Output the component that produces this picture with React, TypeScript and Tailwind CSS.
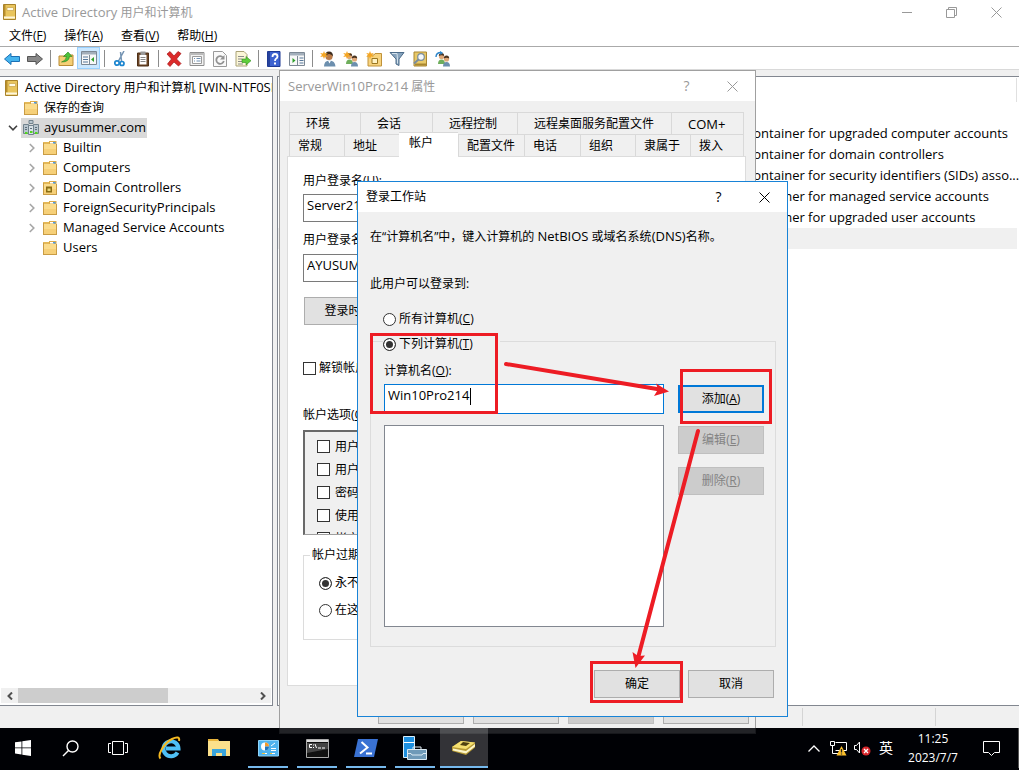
import React from "react";

const FolderIcon = ({ badge }: any) => (
  <svg width="16" height="16" viewBox="0 0 16 16" className="shrink-0">
    <path d="M1 2h6v2H1z" fill="#e3b858" />
    <path d="M7 1h7.500v3.500H7z" fill="#dcab4a" />
    <path d="M8 2h4v1.500H8z" fill="#fff" />
    <path d="M11 2h2.500v1.500H11z" fill="#4d9be6" />
    <path d="M1 4h14v10.500H1z" fill="#fbdc8c" />
    <path d="M1 9h14v5.500H1z" fill="#f6d079" />
    <path d="M1 14.500h14M14.500 4v10.500M1.500 3v11" fill="none" stroke="#c99c45" />
    {badge && (
      <g>
        <path d="M4 6.500h6v6H4z" fill="#8a6d15" />
        <path d="M5.500 8.500h3v2.500h-3z" fill="#e9d67a" />
      </g>
    )}
  </svg>
);

const BookIcon = () => (
  <svg width="16" height="16" viewBox="0 0 16 16" className="shrink-0">
    <path d="M1.500 .5h12v15h-12z" fill="#e9c55d" stroke="#a9832a" />
    <path d="M2 1h1.500v11.500H2z" fill="#b98f2c" />
    <path d="M5 3.500h6.500v3H5z" fill="#fffbe6" stroke="#c7a24a" strokeWidth=".7" />
    <path d="M2 12.500h11v2H2z" fill="#fdf6dd" />
  </svg>
);

const DomainIcon = () => (
  <svg width="16" height="16" viewBox="0 0 16 16" className="shrink-0">
    <path d="M6 .5h4v3H6zM.5 4.500h5v9h-5zM10.500 4.500h5v9h-5z" fill="#b9c6cf" stroke="#71828d" />
    <path d="M5.500 5.500h5v9h-5z" fill="#d7e0e5" stroke="#71828d" />
    <path d="M2 7.500h2M2 9.500h2M7 8.500h2M12 7.500h2M12 9.500h2" stroke="#5f707b" />
    <path d="M2 12h2.500v2H2zM7 11h2.500v2H7zM12 12h2.500v2H12z" fill="#51d61e" />
  </svg>
);

const person = (x: number, y: number, body: string) => (
  <g>
    <path d={`M${x - 3.5} ${y + 9}q0-4.500 3.500-4.500t3.500 4.500z`} fill={body} />
    <circle cx={x} cy={y + 1.5} r="2.600" fill="#e0a878" />
    <path d={`M${x - 2.7} ${y + 1}q0-3 2.700-3t2.700 3q-2.700-1.500-5.400 0z`} fill="#4b3420" />
  </g>
);

const star = (
  <path d="M4 0l1 2.600L7.800 2 6 4l1.800 2L5 5.500 4 8 3 5.500 .2 6 2 4 .2 2 3 2.600z" fill="#f5a623" />
);

const toolIcons: any = {
  back: (
    <path d="M.5 8L7 2.500v3h8.500v5H7v3z" fill="#45b4ee" stroke="#1b70b5" />
  ),
  forward: (
    <path d="M15.500 8L9 2.500v3H.5v5H9v3z" fill="#888" stroke="#555" />
  ),
  up: (
    <g>
      <path d="M1 5h5l1-1h8v10.500H1z" fill="#f5cf76" stroke="#b98b35" />
      <path d="M3.500 11Q8 10 8.500 5.500H5.500L10 1l4 4.500h-2.500Q11 11 3.500 11z" fill="#4cc23b" stroke="#25821b" strokeWidth=".6" />
    </g>
  ),
  tree: (
    <g>
      <path d="M.5 1.500h15v13H.5z" fill="#f8f8f8" stroke="#7c8894" />
      <path d="M1 2h14v2.500H1z" fill="#a3afbb" />
      <path d="M2 7h5M2 9.500h5M2 12h5" stroke="#56789b" />
      <path d="M8.500 5v9" stroke="#7c8894" />
      <path d="M13 7v5l-3-2.500z" fill="#2fa02a" />
    </g>
  ),
  cut: (
    <g fill="none">
      <path d="M12 0L6.500 10M8.500 1L9.500 10" stroke="#7594b3" strokeWidth="1.500" />
      <circle cx="5" cy="12" r="2.200" stroke="#1c85cf" strokeWidth="1.700" />
      <circle cx="10" cy="12.500" r="2" stroke="#1c85cf" strokeWidth="1.700" />
    </g>
  ),
  paste: (
    <g>
      <path d="M2.500 2h11v13h-11z" fill="#6b4526" stroke="#4d2f17" />
      <path d="M4.500 4h7v9.500h-7z" fill="#fff" />
      <path d="M5.500 .5h5V4h-5z" fill="#999" />
      <path d="M5.500 6.500h5M5.500 8.500h5M5.500 10.500h5" stroke="#888" />
    </g>
  ),
  remove: (
    <path d="M1 3l3-2.500L8 5l4-4.500 3 2L10.500 8 15 12.500 12.500 15 8 11l-4 4.500L1.500 13 5.500 8z" fill="#dc2a2a" stroke="#a31515" strokeWidth=".7" />
  ),
  props: (
    <g>
      <path d="M1 1.500h14v13H1z" fill="#f3f3f3" stroke="#8e8e8e" />
      <path d="M1.500 2h13v2h-13z" fill="#bbb" />
      <path d="M3.500 5.500h9v7h-9z" fill="#fff" stroke="#9a9a9a" />
      <path d="M5 7.500h1M7.500 7.500h4M5 10h1M7.500 10h4" stroke="#6f8fb0" />
    </g>
  ),
  refresh: (
    <g>
      <path d="M1.500 .5h9l4 4v11h-13z" fill="#fafafa" stroke="#9a9a9a" />
      <path d="M11 6.500A3.800 3.800 0 1 0 11.800 10" fill="none" stroke="#929292" strokeWidth="1.800" />
      <path d="M12.500 4v4.500H8z" fill="#929292" />
    </g>
  ),
  export: (
    <g>
      <path d="M1 .5h8l3 3v11.500H1z" fill="#fbf6d8" stroke="#aaa277" />
      <path d="M3 5.500h6M3 8h4M3 10.500h4M3 13h5" stroke="#8c8c8c" />
      <path d="M7 8h4V5.500L16 9.700 11 14v-2.500H7z" fill="#5fce3c" stroke="#2f8d1c" strokeWidth=".6" />
    </g>
  ),
  help: (
    <g>
      <path d="M1.500 .5h12.500v15H1.500z" fill="#3d62d0" stroke="#1f3a94" />
      <path d="M2 1h2v14H2z" fill="#27439e" />
      <path d="M6.500 6q0-3 2.500-3t2.500 2.500q0 1.500-1.500 2.300-1 .6-1 2.200" fill="none" stroke="#fff" strokeWidth="1.800" />
      <path d="M8 11.500h2v2H8z" fill="#fff" />
    </g>
  ),
  pane: (
    <g>
      <path d="M.5 1.500h15v13H.5z" fill="#f8f8f8" stroke="#7c8894" />
      <path d="M1 2h14v2.500H1z" fill="#a3afbb" />
      <path d="M10.500 7h4M10.500 9.500h4M10.500 12h4" stroke="#56789b" />
      <path d="M8.500 5v9" stroke="#7c8894" />
      <path d="M3.500 7v5l3-2.500z" fill="#2fa02a" />
    </g>
  ),
  user: (
    <g>
      <path d="M4 15.500Q4 9.500 9.500 9.500t6 6z" fill="#6c8fae" />
      <path d="M8 9.500l1.500 3 1.500-3z" fill="#fff" />
      <circle cx="9" cy="5.500" r="3.600" fill="#b97a48" />
      <path d="M5 5.500Q5 .5 9 .5t4 5q-1-2-3.500-2.500T5 5.500z" fill="#3b2b1e" />
      {star}
    </g>
  ),
  users: (
    <g>
      {person(6.5, 4, "#6fae5c")}
      {person(11.5, 6.5, "#6c8fae")}
      {star}
    </g>
  ),
  newou: (
    <g>
      <path d="M2 4h6l1-1.500h6.500V15H2z" fill="#f7d37e" stroke="#c0923a" />
      <path d="M6 7.500h5.500v5H6z" fill="#fff2c4" stroke="#9a7620" />
      {star}
    </g>
  ),
  filter: (
    <g>
      <path d="M1 1.500h14L10 8v6.500l-3-1.500V8z" fill="#86a3bd" stroke="#4d6c8a" />
      <path d="M3 2.500h5L8.500 8v4.500" fill="none" stroke="#d5e2ec" />
    </g>
  ),
  find: (
    <g>
      <path d="M2 1h12.500v14H2z" fill="#e8c968" stroke="#a98630" />
      <path d="M3 12.500h11v2H3z" fill="#a98630" />
      <circle cx="9" cy="6" r="3.300" fill="#f4f8fb" stroke="#7a8d9c" strokeWidth="1.200" />
      <path d="M6.500 8.500L2 12.500" stroke="#7a8d9c" strokeWidth="2" />
    </g>
  ),
  group: (
    <g>
      {person(6.5, 4, "#6fae5c")}
      {person(11.5, 6.5, "#6c8fae")}
      <path d="M1 6Q1 1.500 6 1.500" fill="none" stroke="#2b84c9" strokeWidth="1.400" />
      <path d="M5 0l3 1.700L5.500 4z" fill="#2b84c9" />
    </g>
  ),
};

const tools = [
  "back", "forward", "|", "up", "tree", "|", "cut", "paste", "|", "remove", "props", "refresh", "export",
  "|", "help", "pane", "|", "user", "users", "newou", "filter", "find", "group",
];

const menus = [
  ["文件", "F"],
  ["操作", "A"],
  ["查看", "V"],
  ["帮助", "H"],
];

const Key = ({ k }: any) => (
  <>
    (<span className="underline underline-offset-1">{k}</span>)
  </>
);

const Close = () => (
  <svg width="11" height="11" viewBox="0 0 11 11" stroke="currentColor">
    <path d="M.5 .5l10 10M10.500 .5l-10 10" />
  </svg>
);

const TreeRow = ({ level, label, icon, arrow, selected }: any) => {
  const pad = level === 0 ? "pl-[2px]" : level === 1 ? "pl-1" : "pl-[23px]";
  return (
    <li className={"flex h-5 items-center whitespace-nowrap " + pad}>
      {level > 0 && (
        <span className="flex w-[17px] shrink-0 justify-center">
          {arrow === "down" && (
            <svg width="10" height="6" viewBox="0 0 10 6" fill="none" stroke="#404040" strokeWidth="1.600">
              <path d="M1 .8l4 4 4-4" />
            </svg>
          )}
          {arrow === "right" && (
            <svg width="6" height="10" viewBox="0 0 6 10" fill="none" stroke="#a6a6a6" strokeWidth="1.600">
              <path d="M.8 1l4 4-4 4" />
            </svg>
          )}
        </span>
      )}
      <span className={"flex h-5 items-center gap-[5px] pl-[2px] pr-px " + (selected ? "bg-[#d9d9d9]" : "")}>
        {icon}
        {label}
      </span>
    </li>
  );
};

const tree = [
  { level: 1, label: "保存的查询", icon: <FolderIcon /> },
  { level: 1, label: "ayusummer.com", icon: <DomainIcon />, arrow: "down", selected: true, latin: true },
  { level: 2, label: "Builtin", icon: <FolderIcon />, arrow: "right", latin: true },
  { level: 2, label: "Computers", icon: <FolderIcon />, arrow: "right", latin: true },
  { level: 2, label: "Domain Controllers", icon: <FolderIcon badge />, arrow: "right", latin: true },
  { level: 2, label: "ForeignSecurityPrincipals", icon: <FolderIcon />, arrow: "right", latin: true },
  { level: 2, label: "Managed Service Accounts", icon: <FolderIcon />, arrow: "right", latin: true },
  { level: 2, label: "Users", icon: <FolderIcon />, latin: true },
];

const descriptions = [
  "container for upgraded computer accounts",
  "container for domain controllers",
  "container for security identifiers (SIDs) asso...",
  "container for managed service accounts",
  "container for upgraded user accounts",
];

const Console = () => (
  <main className="flex min-h-0 flex-1 flex-col bg-white">
    <header className="flex h-6 items-center justify-between pl-[2px] text-[#999]">
      <h1 className="flex items-center gap-1">
        <BookIcon />
        <span>
          <span className="text-[13px]">Active Directory</span> 用户和计算机
        </span>
      </h1>
      <div className="flex h-5">
        <button aria-label="最小化" className="flex w-[45px] items-center justify-center">
          <span className="h-px w-[10px] bg-[#999]" />
        </button>
        <button aria-label="还原" className="flex w-[45px] items-center justify-center">
          <svg width="11" height="11" viewBox="0 0 11 11" fill="none" stroke="#999">
            <path d="M.5 2.500h8v8h-8zM2.500 2.500v-2h8v8h-2" />
          </svg>
        </button>
        <button aria-label="关闭" className="flex w-[45px] items-center justify-center">
          <Close />
        </button>
      </div>
    </header>
    <nav className="flex h-[23px] items-center border-b border-[#aaa] pt-px">
      {menus.map(([name, k]) => (
        <button key={name} className="px-[9px]">
          {name}
          <Key k={k} />
        </button>
      ))}
    </nav>
    <div className="flex h-[23px] border-b border-[#d9d9d9]">
      {tools.map((t, i) =>
        t === "|" ? (
          <span key={i} className="flex w-2 items-center justify-center">
            <span className="h-[17px] w-px bg-[#8c8c8c]" />
          </span>
        ) : (
          <button
            key={i}
            aria-label={t}
            className={
              "flex w-[23px] items-end justify-center pb-[2px] " +
              (t === "tree" ? "border border-[#99d1ff] bg-[#cce8ff]" : "")
            }
          >
            <svg width="16" height="16" viewBox="0 0 16 16" className="shrink-0">
              {toolIcons[t]}
            </svg>
          </button>
        )
      )}
    </div>
    <div className="flex min-h-0 flex-1 gap-1 bg-[#f0f0f0] pt-[6px]">
      <aside className="flex w-[273px] shrink-0 flex-col justify-between border border-l-0 border-[#828790] bg-white">
        <ul className="overflow-hidden pr-px pt-px">
          <TreeRow
            level={0}
            icon={<BookIcon />}
            label={
              <span className="pb-[2px]">
                <span className="text-[13px]">Active Directory</span> 用户和计算机{" "}
                <span className="text-[13px]">[WIN-NTF0SRV]</span>
              </span>
            }
          />
          {tree.map((n) => (
            <TreeRow
              key={n.label}
              {...n}
              label={<span className={n.latin ? "pb-[2px] text-[13px]" : ""}>{n.label}</span>}
            />
          ))}
        </ul>
        <div className="mx-px mb-[2px] flex h-[15px] bg-[#f0f0f0]">
          <button aria-label="向左" className="flex w-[17px] items-center justify-center">
            <svg width="6" height="8" viewBox="0 0 6 8" fill="none" stroke="#505050" strokeWidth="2">
              <path d="M5 .5L1.500 4 5 7.500" />
            </svg>
          </button>
          <span className="w-[150px] bg-[#cdcdcd]" />
          <button aria-label="向右" className="ml-auto flex w-[17px] items-center justify-center">
            <svg width="6" height="8" viewBox="0 0 6 8" fill="none" stroke="#505050" strokeWidth="2">
              <path d="M1 .5L4.500 4 1 7.500" />
            </svg>
          </button>
        </div>
      </aside>
      <section className="min-w-0 flex-1 border border-r-0 border-[#828790] bg-white pt-px">
        <div className="h-[45px] pr-[2px]">
          <div className="h-6 border-r border-[#e0e0e0]" />
        </div>
        <ul className="overflow-hidden whitespace-nowrap text-[13px]">
          {descriptions.map((d) => (
            <li key={d} className="h-[21px] pl-[469px] leading-[21px]">
              {d}
            </li>
          ))}
          <li className="mr-[2px] h-[21px] bg-[#f0f0f0]" />
        </ul>
      </section>
    </div>
    <footer className="flex h-[22px] justify-end bg-[#f0f0f0] py-[2px]">
      <span className="w-[133px] border-l border-[#d4d4d4]" />
      <span className="w-[84px] border-l border-[#d4d4d4]" />
    </footer>
  </main>
);

const btn = "h-7 w-[86px] border border-[#adadad] bg-[#e1e1e1]";
const btnOff = "h-7 w-[86px] border border-[#bfbfbf] bg-[#ccc] text-[#838383]";
const radio =
  "h-[13px] w-[13px] shrink-0 appearance-none rounded-full border border-[#333] bg-white checked:bg-[#333] checked:shadow-[inset_0_0_0_2px_white]";
const check = "h-[13px] w-[13px] shrink-0 appearance-none border border-[#333] bg-white";

const tabsTop = [
  ["环境", "w-[71px]"],
  ["会话", "w-[72px]"],
  ["远程控制", "w-[85px]"],
  ["远程桌面服务配置文件", "w-[154px]"],
  ["COM+", "flex-1 text-[13px]"],
];

const tabsBottom = [
  ["常规", "w-[55px]"],
  ["地址", "w-[55px]"],
  ["帐户", "w-[59px]"],
  ["配置文件", "w-[66px]"],
  ["电话", "w-[56px]"],
  ["组织", "w-[55px]"],
  ["隶属于", "w-[55px]"],
  ["拨入", "flex-1"],
];

const options = ["用户下次登录时须更改密码", "用户不能更改密码", "密码永不过期", "使用可逆加密存储密码", "帐户已禁用"];

const Properties = () => (
  <section className="absolute left-[279px] top-[70px] flex h-[664px] w-[477px] flex-col border border-[#a0a0a0] bg-[#f0f0f0]">
    <header className="flex h-[30px] shrink-0 items-center justify-between bg-white pl-2 text-[#999]">
      <h2>
        <span className="text-[13px]">ServerWin10Pro214</span> 属性
      </h2>
      <div className="flex">
        <button className="w-[45px] text-[14px]">?</button>
        <button aria-label="关闭" className="flex w-[46px] items-center justify-center">
          <Close />
        </button>
      </div>
    </header>
    <div className="flex-1 pl-[7px] pr-[9px] pt-[11px]">
      <div className="mx-[2px] flex h-[22px] border-r border-[#d9d9d9]">
        {tabsTop.map(([name, w]) => (
          <button key={name} className={"border-l border-t border-[#d9d9d9] pl-4 text-left " + w}>
            {name}
          </button>
        ))}
      </div>
      <div className="mx-[2px] flex h-[22px] border-r border-[#d9d9d9]">
        {tabsBottom.map(([name, w]) => (
          <button
            key={name}
            className={
              "border-t border-[#d9d9d9] text-left " +
              w +
              (name === "帐户" ? " relative -mb-px -mt-[2px] bg-white pb-1 pl-[10px]" : " border-l pl-2")
            }
          >
            {name}
          </button>
        ))}
      </div>
      <form className="h-[530px] border border-[#dcdcdc] bg-white px-[15px] pt-4">
        <label htmlFor="logon" className="block">
          用户登录名
          <Key k="U" />:
        </label>
        <input id="logon" defaultValue="Server214" className="mt-[5px] block h-7 w-[200px] border border-[#7a7a7a] px-[3px] pb-[6px] text-[13px]" />
        <label htmlFor="domain" className="mt-[10px] block">
          用户登录名
          <Key k="W" />:
        </label>
        <input id="domain" defaultValue="AYUSUMMER\" className="mt-[6px] block h-7 w-[200px] border border-[#7a7a7a] px-[3px] pb-[6px] text-[13px]" />
        <button type="button" className="ml-px mt-[15px] block h-7 w-[112px] border border-[#adadad] bg-[#e1e1e1]">
          登录时间
          <Key k="L" />
          ...
        </button>
        <label className="mt-[35px] flex items-center gap-[3px]">
          <input type="checkbox" className={check} />
          <span>
            解锁帐户
            <Key k="N" />
          </span>
        </label>
        <p className="mt-[31px]">
          帐户选项
          <Key k="O" />:
        </p>
        <div className="mt-[7px] h-[105px] overflow-hidden border-b border-l-2 border-t-2 border-[#a0a0a0] border-l-[#696969] border-t-[#696969] bg-[#f0f0f0] pl-3 pt-[3px]">
          {options.map((o) => (
            <label key={o} className="flex h-[23px] items-center gap-[5px]">
              <input type="checkbox" className={check} />
              {o}
            </label>
          ))}
        </div>
        <fieldset className="mt-3 h-[93px] border border-[#dcdcdc] px-[6px]">
          <legend className="px-[2px]">帐户过期</legend>
          <label className="ml-[9px] mt-3 flex items-center gap-[3px]">
            <input type="radio" name="expire" defaultChecked className={radio} />
            永不过期
          </label>
          <label className="ml-[9px] mt-[11px] flex items-center gap-[3px]">
            <input type="radio" name="expire" className={radio} />
            在这之后
          </label>
        </fieldset>
      </form>
    </div>
    <div className="mb-[9px] flex justify-end gap-[9px] pr-[6px]">
      <button className={btn}>确定</button>
      <button className={btn}>取消</button>
      <button disabled className={btnOff}>
        应用
      </button>
      <button className={btn}>帮助</button>
    </div>
  </section>
);

const Workstations = () => (
  <section className="absolute left-[357px] top-[181px] h-[536px] w-[431px] border border-[#1883d7] bg-[#f0f0f0]">
    <header className="flex h-[30px] items-center justify-between bg-white pl-2">
      <h2>登录工作站</h2>
      <div className="flex">
        <button className="w-[45px] text-[14px]">?</button>
        <button aria-label="关闭" className="flex w-[46px] items-center justify-center">
          <Close />
        </button>
      </div>
    </header>
    <form className="pl-3 pr-[11px] pt-4">
      <p className="h-4">
        在“计算机名”中，键入计算机的 <span className="text-[13px]">NetBIOS</span> 或域名系统
        <span className="text-[13px]">(DNS)</span>名称。
      </p>
      <p className="mt-8">此用户可以登录到:</p>
      <label className="ml-[13px] mt-[19px] flex items-center gap-[3px]">
        <input type="radio" name="where" className={radio} />
        <span>
          所有计算机
          <Key k="C" />
        </span>
      </label>
      <div className="mt-[14px] border border-[#dcdcdc] pb-[19px] pl-[13px] pr-[11px]">
        <label className="relative -ml-px -mt-[6px] flex w-[117px] items-center gap-[3px] bg-[#f0f0f0]">
          <input type="radio" name="where" defaultChecked className={radio} />
          <span>
            下列计算机
            <Key k="T" />
          </span>
        </label>
        <div className="mt-[11px] flex gap-[14px]">
          <div className="flex-1">
            <label htmlFor="computer" className="block">
              计算机名
              <Key k="O" />:
            </label>
            <div className="relative mt-[5px]">
              <input id="computer" defaultValue="Win10Pro214" className="block h-[30px] w-full border border-[#0078d7] bg-white px-[3px] pb-2 text-[13px] outline-none" />
              <span className="absolute left-[86px] top-1 h-[17px] w-px bg-black" />
            </div>
            <div role="listbox" className="mt-[11px] h-[202px] border border-[#828790] bg-white" />
          </div>
          <div className="flex flex-col gap-[13px] pt-[22px]">
            <button type="button" className="h-7 w-[86px] border-2 border-[#0078d7] bg-[#e1e1e1]">
              添加
              <Key k="A" />
            </button>
            <button type="button" disabled className={btnOff}>
              编辑
              <Key k="E" />
            </button>
            <button type="button" disabled className={btnOff}>
              删除
              <Key k="R" />
            </button>
          </div>
        </div>
      </div>
      <div className="mt-[23px] flex justify-end gap-2 pr-[2px]">
        <button type="button" className={btn}>
          确定
        </button>
        <button type="button" className={btn}>
          取消
        </button>
      </div>
    </form>
  </section>
);

// red boxes and arrows drawn over the dialogs
const Marks = () => (
  <svg width="1019" height="770" viewBox="0 0 1019 770" className="pointer-events-none absolute left-0 top-0">
    <g fill="none" stroke="#ed1c24" strokeWidth="3">
      <path d="M371.500 334.500h125v78h-125z" />
      <path d="M681.500 370.500h89v52h-89z" />
      <path d="M591.500 662.500h90v39h-90z" />
      <path d="M506 364L660 389.500M698 431L638 658" strokeWidth="4" strokeLinecap="round" />
    </g>
    <path d="M669 391.500L656 383.500 658 389.500 654 396z" fill="#ed1c24" />
    <path d="M635.500 668L632.500 652 638 656 645 655.500z" fill="#ed1c24" />
  </svg>
);

const apps = [
  {
    name: "Internet Explorer",
    icon: (
      <svg width="24" height="24" viewBox="0 0 24 24" fill="none">
        <path d="M19.500 16.500A7.500 7.500 0 1 1 20.500 12.500H8" stroke="#4fc0f5" strokeWidth="4" />
        <path d="M2.500 22.500C-1 19 6 7 14 3c5-2.500 8-2 7 2" stroke="#f5b921" strokeWidth="2" />
      </svg>
    ),
  },
  {
    name: "文件资源管理器",
    icon: (
      <svg width="22" height="20" viewBox="0 0 22 20">
        <path d="M0 1h10l1 2h11v15H0z" fill="#fbe08b" />
        <path d="M0 1h10v2H0z" fill="#e8b43c" />
        <path d="M4 18v-7h14v7h-4v-3H8v3z" fill="#3aa5dc" />
      </svg>
    ),
  },
  {
    name: "控制面板",
    open: true,
    icon: (
      <svg width="21" height="17" viewBox="0 0 21 17">
        <path d="M.5 .5h20v15.500H.5z" fill="#4fb3ee" stroke="#8fd4fa" />
        <circle cx="7" cy="6.500" r="4" fill="#fff" />
        <path d="M7 6.500V2.500a4 4 0 0 1 4 4z" fill="#f39a2c" />
        <path d="M7 6.500v4a4 4 0 0 0 4-4z" fill="#2076c0" />
        <path d="M13 6l4-3M13 8.500h5M13 10.500h5M4 13.500h5M12 13.500h5" stroke="#fff" />
        <path d="M4 13.500h3M12 13.500h2" stroke="#f5c33a" />
      </svg>
    ),
  },
  {
    name: "命令提示符",
    open: true,
    icon: (
      <svg width="23" height="19" viewBox="0 0 23 19" fill="none">
        <path d="M.5 .5h22v18H.5z" fill="#111" stroke="#aaa" />
        <path d="M1 1h21v2H1z" fill="#ddd" />
        <path d="M1 4h21v6L1 14z" fill="#444" />
        <path d="M6 5.500H3.500v3H6M7.500 5.500v1M7.500 8v1M9 5l1.500 4M12 9h3M16 9h3" stroke="#fff" />
      </svg>
    ),
  },
  {
    name: "PowerShell",
    open: true,
    icon: (
      <svg width="24" height="18" viewBox="0 0 24 18" fill="none">
        <path d="M4 0h20l-4 18H0z" fill="#3a72d3" />
        <path d="M7.500 3l6 5.500-7.500 6M12 14.500h6" stroke="#fff" strokeWidth="2" />
      </svg>
    ),
  },
  {
    name: "服务器管理器",
    open: true,
    icon: (
      <svg width="24" height="24" viewBox="0 0 24 24">
        <path d="M.5 .5h11v21H.5z" fill="#1e90e0" stroke="#d8eefb" />
        <path d="M1 6.500h10" stroke="#fff" />
        <path d="M4.500 13.500h19v10h-19z" fill="#6f9ab8" stroke="#dceaf3" />
        <path d="M10 13v-2h8v2M5 17.500h3l1 1.500h10l1-1.500h3" fill="none" stroke="#dceaf3" />
      </svg>
    ),
  },
  {
    name: "Active Directory 用户和计算机",
    open: true,
    active: true,
    icon: (
      <svg width="24" height="18" viewBox="0 0 24 18">
        <path d="M0 8l9-6 14 1.500v5L14 16 0 12z" fill="#b79a34" />
        <path d="M0 8l9-6 14 1.500L14 10z" fill="#f5e070" />
        <path d="M1 9.500l13 2.500 9-7v2.500L14 14.500 1 11.500z" fill="#fdf6c8" />
        <path d="M8 6l3-3 7 1-4 3z" fill="#4f4110" />
      </svg>
    ),
  },
];

const Taskbar = () => (
  <footer className="relative flex h-[42px] shrink-0 bg-[rgba(0,1,6,0.86)] pb-[2px] text-white">
    <button aria-label="开始" className="flex w-[46px] items-center justify-center">
      <svg width="16" height="16" viewBox="0 0 16 16" fill="#fff">
        <path d="M0 2.300l6.500-.9v6.100H0zM7.300 1.300L16 0v7.500H7.300zM0 8.300h6.500v6.200L0 13.600zM7.300 8.300H16V16l-8.700-1.300z" />
      </svg>
    </button>
    <button aria-label="搜索" className="flex w-12 items-center justify-center">
      <svg width="17" height="17" viewBox="0 0 17 17" fill="none" stroke="#fff" strokeWidth="1.400">
        <circle cx="10.500" cy="6.500" r="5.500" />
        <path d="M6.500 10.500L1 16" />
      </svg>
    </button>
    <button aria-label="任务视图" className="flex w-12 items-center justify-center">
      <svg width="20" height="14" viewBox="0 0 20 14" fill="none" stroke="#fff">
        <path d="M4.500 .5h11v13h-11zM3 2.500H.5v9H3M17 2.500h2.500v9H17" />
      </svg>
    </button>
    <div className="ml-1 flex gap-px">
      {apps.map((a) => (
        <button
          key={a.name}
          aria-label={a.name}
          className={"relative flex w-12 items-center justify-center " + (a.active ? "bg-[#ffffff33]" : "")}
        >
          {a.icon}
          {a.open && (
            <span className={"absolute bottom-0 h-[2px] bg-[#76b9ed] " + (a.active ? "inset-x-0" : "inset-x-1")} />
          )}
        </button>
      ))}
    </div>
    <div className="ml-auto flex items-center">
      <button aria-label="显示隐藏的图标" className="flex w-6 justify-center">
        <svg width="12" height="7" viewBox="0 0 12 7" fill="none" stroke="#fff" strokeWidth="1.300">
          <path d="M.5 6.500L6 1l5.500 5.500" />
        </svg>
      </button>
      <button aria-label="网络" className="flex w-6 justify-center">
        <svg width="17" height="15" viewBox="0 0 17 15" fill="none" stroke="#fff">
          <path d="M5.500 1.500h11v8h-11M.5 .5h4v4h-4zM2.500 4.500v8M2.500 12.500h6" />
          <path d="M11.500 5L16.500 14.500h-10z" fill="#fbc02d" stroke="none" />
          <path d="M11.500 8v3.500M11.500 12.500v1" stroke="#222" strokeWidth="1.300" />
        </svg>
      </button>
      <button aria-label="音量" className="flex w-6 justify-center">
        <svg width="17" height="15" viewBox="0 0 17 15" fill="none" stroke="#fff">
          <path d="M.5 4.500h2l3-3.500v11l-3-3.500h-2z" />
          <circle cx="12" cy="10" r="4.500" fill="#d8272c" stroke="none" />
          <path d="M10 8l4 4M14 8l-4 4" strokeWidth="1.300" />
        </svg>
      </button>
      <button className="w-6 text-[14px]">英</button>
      <time className="w-[70px] text-center text-[12px] leading-[19px]">
        11:25
        <br />
        2023/7/7
      </time>
      <button aria-label="通知" className="flex w-[46px] justify-center">
        <svg width="17" height="17" viewBox="0 0 17 17" fill="none" stroke="#fff">
          <path d="M.5 1.500h16v11h-5l-3 3-3-3h-5z" />
        </svg>
      </button>
      <span className="ml-1 h-10 w-px bg-[#555]" />
    </div>
  </footer>
);

const App = () => {
  return (
    <div className="relative flex h-screen flex-col overflow-hidden bg-black font-['Open_Sans','Noto_Sans_CJK_SC',sans-serif] text-[12px] leading-4 text-black">
      <Console />
      <Properties />
      <Taskbar />
      <Workstations />
      <Marks />
    </div>
  );
};

export default App;
